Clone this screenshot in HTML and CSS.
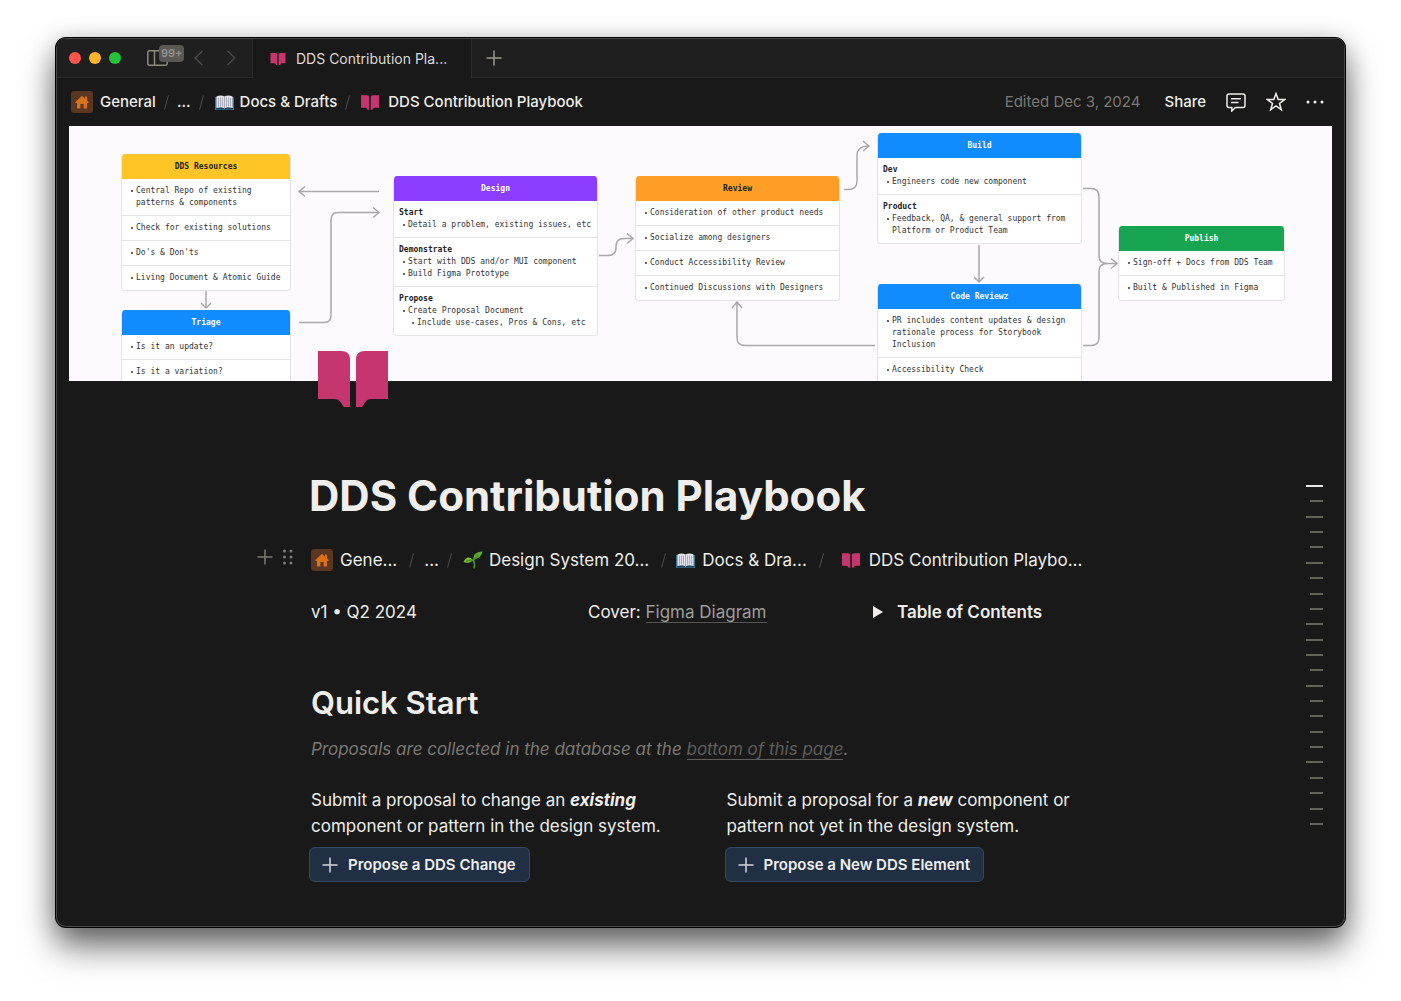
FILE: index.html
```html
<!DOCTYPE html>
<html lang="en">
<head>
    <meta charset="UTF-8">
    <meta name="viewport" content="width=device-width, initial-scale=1.0">
    <title>DDS Contribution Playbook</title>
    <link rel="stylesheet" href="styles.css">
</head>
<body>
    <!-- shared icons -->
    <svg class="sprite" aria-hidden="true">
        <symbol id="book" viewBox="0 0 70 56">
            <path d="M0 0H23C29 0 32 3 32 8V56H26C23 53 23 48 16 48H0Z"/>
            <path d="M70 0H47C41 0 38 3 38 8V56H44C47 53 47 48 54 48H70Z"/>
        </symbol>
        <symbol id="home" viewBox="0 0 14 14">
            <path d="M7 .8 10 3.4V1.6h2v3.6L13.6 7v1H12v5.4H8.6V9H5.4v4.4H2V8H.4V7Z"/>
        </symbol>
        <symbol id="open-book" viewBox="0 0 19 15">
            <path fill="#3a7394" d="M0 2h19v13H0z"/>
            <path fill="#1d4259" d="M1 13h17v1.500H1z"/>
            <path fill="#e4e4ee" d="M1.500 1.500C4 0 7.500 0 9.500 1.500 11.500 0 15 0 17.500 1.500V13c-2.500-1-6-1-8 .5-2-1.500-5.500-1.500-8-.5Z"/>
            <path stroke="#9a9aab" stroke-width=".8" fill="none" d="M9.500 1.500v12M3.500 3v8.500M5.500 2.500v9M7.500 2.500v9M11.500 2.500v9M13.500 2.500v9M15.500 3v8.500"/>
        </symbol>
        <symbol id="seedling" viewBox="0 0 20 18">
            <path fill="#5fae2b" d="M10.500 8C10 3.500 13 1 19.500 .5 18.500 5 16 8 10.500 8Z"/>
            <path fill="#74c234" d="M.5 11C2 6.500 6.500 4.500 10 9 7.500 12 3.500 12.500.5 11Z"/>
            <path fill="none" stroke="#4c8f20" stroke-width="1.600" d="M15.500 3.500 10.500 9c1.200 2.500 1.300 5.500.5 8.500M3 10c3-.8 5-.8 7.500-.5"/>
        </symbol>
        <symbol id="plus" viewBox="0 0 16 16">
            <path fill="none" stroke="currentColor" stroke-width="1.500" d="M8 .5v15M.5 8h15"/>
        </symbol>
    </svg>

    <div class="window">
        <div class="tab-bar">
            <div class="tab-tools">
                <div class="lights">
                    <span class="light red"></span>
                    <span class="light yellow"></span>
                    <span class="light green"></span>
                </div>
                <button class="icon-button sidebar-button" aria-label="Open sidebar">
                    <svg width="21" height="16" viewBox="0 0 21 16"><path d="M2.500.8h16q1.700 0 1.700 1.700v11q0 1.700-1.700 1.700h-16Q.8 15.200.8 13.500v-11Q.8.8 2.500.8ZM7.500 1v14"/></svg>
                    <span class="badge">99+</span>
                </button>
                <button class="icon-button nav-button" aria-label="Back">
                    <svg width="9" height="16" viewBox="0 0 9 16"><path d="M8.500 1 1 8l7.500 7"/></svg>
                </button>
                <button class="icon-button nav-button forward" aria-label="Forward">
                    <svg width="9" height="16" viewBox="0 0 9 16"><path d="M.5 1 8 8 .5 15"/></svg>
                </button>
            </div>
            <a href="#" class="tab">
                <svg class="book-small"><use href="#book"/></svg>
                DDS Contribution Pla...
            </a>
            <div class="tab-rest">
                <button class="icon-button" aria-label="New tab"><svg width="16" height="16"><use href="#plus"/></svg></button>
            </div>
        </div>

        <header class="top-bar">
            <nav class="crumbs">
                <a href="#"><span class="home-tile"><svg><use href="#home"/></svg></span>General</a>
                <span class="slash"></span>
                <a href="#">...</a>
                <span class="slash"></span>
                <a href="#" class="with-icon"><svg class="open-book"><use href="#open-book"/></svg>Docs &amp; Drafts</a>
                <span class="slash"></span>
                <a href="#" class="with-book"><svg class="book"><use href="#book"/></svg>DDS Contribution Playbook</a>
            </nav>
            <div class="actions">
                <span class="edited">Edited Dec 3, 2024</span>
                <button class="share">Share</button>
                <button class="icon-button" aria-label="Comments">
                    <svg width="20" height="19" viewBox="0 0 20 19"><path d="M3 1h14q2 0 2 2v9.500q0 2-2 2H9.500L5.800 18v-3.500H3q-2 0-2-2V3q0-2 2-2ZM5 5.800h10M5 9.500h7.500"/></svg>
                </button>
                <button class="icon-button" aria-label="Favorite">
                    <svg width="20" height="20" viewBox="0 0 20 20"><path d="m10 1.600 2.200 6h6.300l-5 3.900 1.800 6.200L10 14l-5.300 3.700 1.800-6.200-5-3.900h6.300Z"/></svg>
                </button>
                <button class="icon-button" aria-label="More">
                    <svg class="dots" width="18" height="4" viewBox="0 0 18 4"><circle cx="2" cy="2" r="1.500"/><circle cx="9" cy="2" r="1.500"/><circle cx="16" cy="2" r="1.500"/></svg>
                </button>
            </div>
        </header>

        <div class="cover">
            <div class="diagram">
                <svg class="arrows" viewBox="69 126 1263 255" width="1263" height="255">
                    <path d="M379 191.500H299m6-5-6 5 6 5"/>
                    <path d="M299 322.500h25q7 0 7-7V220q0-7.500 7-7.500h41m-6-5 6 5-6 5"/>
                    <path d="M206 291v17m-5-5 5 5 5-5"/>
                    <path d="M599 255.500h9q8 0 8-8v-1q0-8 8-8h9m-6-5 6 5-6 5"/>
                    <path d="M844 189.500h4q9 0 9-8V156q0-10 12-10m-6-5 6 5-6 5"/>
                    <path d="M875 345.500H745q-8 0-8-8V302m-5 6 5-6 5 6"/>
                    <path d="M979 245v37m-5-5 5 5 5-5"/>
                    <path d="M1083 188.500h8q8 0 8 8V256q0 7.500 8 7.500h10m-6-5 6 5-6 5"/>
                    <path d="M1083 345.500h8q8 0 8-8V271q0-7.500 8-7.500"/>
                </svg>

                <section class="card resources">
                    <h4>DDS Resources</h4>
                    <ul><li>Central Repo of existing<br>patterns &amp; components</li></ul>
                    <ul><li>Check for existing solutions</li></ul>
                    <ul><li>Do's &amp; Don'ts</li></ul>
                    <ul><li>Living Document &amp; Atomic Guide</li></ul>
                </section>
                <section class="card triage">
                    <h4>Triage</h4>
                    <ul><li>Is it an update?</li></ul>
                    <ul><li>Is it a variation?</li></ul>
                </section>
                <section class="card design">
                    <h4>Design</h4>
                    <ul><b>Start</b><li>Detail a problem, existing issues, etc</li></ul>
                    <ul><b>Demonstrate</b><li>Start with DDS and/or MUI component</li><li>Build Figma Prototype</li></ul>
                    <ul><b>Propose</b><li>Create Proposal Document</li><li class="nested">Include use-cases, Pros &amp; Cons, etc</li></ul>
                </section>
                <section class="card review">
                    <h4>Review</h4>
                    <ul><li>Consideration of other product needs</li></ul>
                    <ul><li>Socialize among designers</li></ul>
                    <ul><li>Conduct Accessibility Review</li></ul>
                    <ul><li>Continued Discussions with Designers</li></ul>
                </section>
                <section class="card build">
                    <h4>Build</h4>
                    <ul><b>Dev</b><li>Engineers code new component</li></ul>
                    <ul><b>Product</b><li>Feedback, QA, &amp; general support from<br>Platform or Product Team</li></ul>
                </section>
                <section class="card code-review">
                    <h4>Code Reviewz</h4>
                    <ul><li>PR includes content updates &amp; design<br>rationale process for Storybook<br>Inclusion</li></ul>
                    <ul><li>Accessibility Check</li></ul>
                </section>
                <section class="card publish">
                    <h4>Publish</h4>
                    <ul><li>Sign-off + Docs from DDS Team</li></ul>
                    <ul><li>Built &amp; Published in Figma</li></ul>
                </section>
            </div>
        </div>

        <div class="page">
            <main class="content">
                <svg class="page-icon"><use href="#book"/></svg>
                <h1>DDS Contribution Playbook</h1>

                <nav class="crumbs page-crumbs">
                    <div class="block-tools">
                        <button class="icon-button" aria-label="Add block"><svg width="16" height="16"><use href="#plus"/></svg></button>
                        <button class="icon-button" aria-label="Drag block">
                            <svg class="dots" width="10" height="16" viewBox="0 0 10 16"><circle cx="1.500" cy="2" r="1.500"/><circle cx="8" cy="2" r="1.500"/><circle cx="1.500" cy="8" r="1.500"/><circle cx="8" cy="8" r="1.500"/><circle cx="1.500" cy="14" r="1.500"/><circle cx="8" cy="14" r="1.500"/></svg>
                        </button>
                    </div>
                    <a href="#"><span class="home-tile"><svg><use href="#home"/></svg></span>Gene...</a>
                    <span class="slash wide"></span>
                    <a href="#">...</a>
                    <span class="slash"></span>
                    <a href="#" class="with-icon"><svg class="seedling"><use href="#seedling"/></svg>Design System 20...</a>
                    <span class="slash wide"></span>
                    <a href="#"><svg class="open-book"><use href="#open-book"/></svg>Docs &amp; Dra...</a>
                    <span class="slash wide"></span>
                    <a href="#" class="with-book"><svg class="book"><use href="#book"/></svg>DDS Contribution Playbo...</a>
                </nav>

                <div class="columns meta">
                    <p>v1 • Q2 2024</p>
                    <p>Cover: <a href="#" class="text-link">Figma Diagram</a></p>
                    <details>
                        <summary><svg width="10" height="12" viewBox="0 0 10 12"><path d="M0 0 10 6 0 12Z"/></svg>Table of Contents</summary>
                    </details>
                </div>

                <h2>Quick Start</h2>
                <p class="note">Proposals are collected in the database at the <a href="#">bottom of this page</a>.</p>

                <div class="columns">
                    <div>
                        <p>Submit a proposal to change an <b><i>existing</i></b><br>component or pattern in the design system.</p>
                        <button class="propose"><svg width="16" height="16"><use href="#plus"/></svg>Propose a DDS Change</button>
                    </div>
                    <div>
                        <p>Submit a proposal for a <b><i>new</i></b> component or<br>pattern not yet in the design system.</p>
                        <button class="propose"><svg width="16" height="16"><use href="#plus"/></svg>Propose a New DDS Element</button>
                    </div>
                </div>
            </main>

            <aside class="outline">
                <span class="long active"></span><span></span><span class="long"></span><span></span><span></span><span class="long"></span>
                <span></span><span></span><span></span><span class="long"></span><span class="long"></span><span class="long"></span>
                <span></span><span class="long"></span><span></span><span></span><span></span><span></span>
                <span class="long"></span><span></span><span></span><span></span><span></span>
            </aside>
        </div>
    </div>
</body>
</html>
```
FILE: styles.css
```css
* {
    box-sizing: border-box;
}
body {
    margin: 0;
    padding: 38px 56px 73px;
    background: #fff;
    color: #efeeeb;
    font-family: Inter, "Liberation Sans", sans-serif;
    font-size: 17px;
    line-height: 26px;
}
a {
    color: inherit;
    text-decoration: none;
}
button {
    border: none;
    background: none;
    padding: 0;
    color: inherit;
    font: inherit;
    cursor: pointer;
}
p, h1, h2, h4, ul {
    margin: 0;
}
svg {
    flex-shrink: 0;
    fill: #c4366d;
}
.sprite {
    position: absolute;
    width: 0;
    height: 0;
}
.window {
    background: #191919;
    border-radius: 10px;
    overflow: hidden;
    box-shadow: inset 0 0 0 1px #484848, 0 0 0 1px #000, 0 20px 34px rgba(0, 0, 0, 0.55), 0 4px 26px rgba(0, 0, 0, 0.24);
    padding: 1px 1px 45px;
}

/* tab bar */
.tab-bar {
    display: flex;
    height: 39px;
    font-size: 14px;
}
.tab-tools, .tab-rest {
    display: flex;
    align-items: center;
    background: #1f1f1f;
    border-bottom: 1px solid #2a2a2a;
}
.tab-tools {
    width: 196px;
    padding-left: 12px;
    border-right: 1px solid #2a2a2a;
}
.tab-rest {
    flex: 1;
    padding-left: 14px;
    border-left: 1px solid #2a2a2a;
    color: #9b9993;
}
.lights {
    display: flex;
    gap: 8px;
}
.light {
    width: 12px;
    height: 12px;
    border-radius: 50%;
}
.red {
    background: #ff544d;
}
.yellow {
    background: #ffb429;
}
.green {
    background: #25c138;
}
.icon-button {
    display: flex;
    align-items: center;
}
.icon-button svg {
    fill: none;
    stroke: currentColor;
    stroke-width: 1.5;
}
.icon-button .dots {
    fill: currentColor;
    stroke: none;
}
.sidebar-button {
    position: relative;
    margin-left: 26px;
    color: #8d8a82;
}
.badge {
    position: absolute;
    left: 12px;
    top: -5px;
    padding: 0 2px;
    border-radius: 4px;
    background: #5a5854;
    color: #95928c;
    font-size: 11px;
    font-weight: 600;
    line-height: 17px;
}
.nav-button {
    margin-left: 26px;
    color: #4b4a47;
}
.forward {
    margin-left: 24px;
}
.tab {
    display: flex;
    align-items: center;
    gap: 10px;
    width: 218px;
    padding-left: 17px;
    white-space: nowrap;
    color: #dcdbd8;
}
.book-small {
    width: 16px;
    height: 12px;
}

/* top bar */
.top-bar {
    display: flex;
    align-items: center;
    justify-content: space-between;
    height: 48px;
    padding: 0 20px 0 14px;
    font-size: 15px;
    font-weight: 500;
}
.crumbs, .crumbs a, .actions {
    display: flex;
    align-items: center;
    white-space: nowrap;
}
.crumbs a {
    gap: 7px;
}
.crumbs .with-icon {
    gap: 6px;
    margin-left: 3px;
}
.crumbs .with-book {
    gap: 9px;
    margin-left: 3px;
}
.home-tile {
    display: flex;
    align-items: center;
    justify-content: center;
    width: 22px;
    height: 22px;
    border-radius: 3px;
    background: #5a3722;
}
.home-tile svg {
    width: 14px;
    height: 14px;
    fill: #d9701c;
}
.open-book {
    width: 19px;
    height: 15px;
}
.book {
    width: 18px;
    height: 15px;
}
.seedling {
    width: 20px;
    height: 18px;
}
.slash {
    width: 1px;
    height: 15px;
    margin: 0 10px;
    background: #4d4c49;
    transform: rotate(15deg);
}
.edited {
    color: #7b7873;
    font-weight: 400;
}
.actions {
    gap: 20px;
}
.share {
    margin-left: 4px;
}

/* cover diagram */
.cover {
    display: flex;
    justify-content: center;
    height: 255px;
    margin: 0 12px;
    overflow: hidden;
    background: #fcfafd;
}
.diagram {
    position: relative;
    flex: 0 0 1263px;
}
.arrows {
    display: block;
    fill: none;
    stroke: #a9a9a9;
    stroke-width: 1.5;
}
.arrows path {
    fill: none;
}
.card {
    position: absolute;
    width: 205px;
    border: 1px solid #e4e3e6;
    border-top: none;
    border-radius: 4px;
    overflow: hidden;
    background: #fff;
    color: #333;
    font-family: "DejaVu Sans Mono", monospace;
    font-size: 8px;
    line-height: 12px;
}
.card h4 {
    margin: 0 -1px;
    padding: 7px 0 6px;
    font-size: 8px;
    text-align: center;
    color: #fff;
    background: #118cff;
}
.card ul {
    padding: 6px 6px 6px 14px;
    list-style: none;
}
.card ul + ul {
    border-top: 1px solid #e4e3e6;
}
.card b {
    display: block;
    margin-left: -9px;
    color: #222;
}
.card li {
    position: relative;
    white-space: nowrap;
}
.card li::before {
    content: "";
    position: absolute;
    left: -5px;
    top: 5px;
    width: 2px;
    height: 2px;
    border-radius: 50%;
    background: #333;
}
.card .nested {
    margin-left: 9px;
}
.resources {
    left: 52px;
    top: 28px;
    width: 170px;
}
.triage {
    left: 52px;
    top: 184px;
    width: 170px;
}
.design {
    left: 324px;
    top: 50px;
}
.review {
    left: 566px;
    top: 50px;
}
.build {
    left: 808px;
    top: 7px;
}
.code-review {
    left: 808px;
    top: 158px;
}
.publish {
    left: 1049px;
    top: 100px;
    width: 167px;
}
.resources h4 {
    background: #ffc527;
    color: #222;
}
.design h4 {
    background: #8c3dff;
}
.review h4 {
    background: #ff9e27;
    color: #222;
}
.publish h4 {
    background: #17a551;
}

/* page */
.page {
    display: grid;
    grid-template-columns: 1fr minmax(0, 779px) 1fr;
}
.content {
    grid-column: 2;
}
.page-icon {
    position: relative;
    display: block;
    width: 70px;
    height: 56px;
    margin: -30px 0 62px 7px;
}
h1 {
    margin-left: -2px;
    font-size: 42px;
    line-height: 53px;
    white-space: nowrap;
}
.page-crumbs {
    position: relative;
    margin-top: 25px;
}
.page-crumbs .wide {
    margin: 0 12px 0 14px;
}
.page-crumbs .with-book {
    margin-left: 8px;
}
.block-tools {
    position: absolute;
    right: 100%;
    bottom: 8px;
    display: flex;
    gap: 10px;
    margin-right: 18px;
    color: #7b7a75;
}
.columns {
    display: grid;
    grid-auto-flow: column;
    grid-auto-columns: 1fr;
    gap: 52px;
    white-space: nowrap;
}
.meta {
    margin-top: 26px;
}
.text-link {
    color: #9e9d9a;
    border-bottom: 1px solid #555451;
}
summary {
    display: flex;
    align-items: center;
    gap: 14px;
    padding-left: 8px;
    font-weight: 600;
    list-style: none;
    cursor: pointer;
}
summary svg {
    fill: #efeeeb;
}
h2 {
    margin-top: 58px;
    font-size: 31px;
    font-weight: 600;
    line-height: 40px;
}
.note {
    margin: 13px 0 25px;
    color: #7b7873;
    font-style: italic;
}
.note a {
    color: #5f5d59;
    border-bottom: 1px solid #5f5d59;
}
.propose {
    display: flex;
    align-items: center;
    gap: 10px;
    height: 35px;
    margin: 8px 0 0 -2px;
    padding: 0 13px 0 12px;
    border: 1px solid #344a62;
    border-radius: 6px;
    background: #202f44;
    font-size: 15px;
    font-weight: 600;
}
.propose svg {
    color: #d4d6d8;
}
.outline {
    display: flex;
    flex-direction: column;
    align-items: flex-end;
    justify-content: space-between;
    height: 340px;
    margin: 104px 21px 0 0;
}
.outline span {
    width: 13px;
    height: 2px;
    background: #64635c;
}
.outline .long {
    width: 17px;
}
.outline .active {
    background: #e8e6e8;
}
```
